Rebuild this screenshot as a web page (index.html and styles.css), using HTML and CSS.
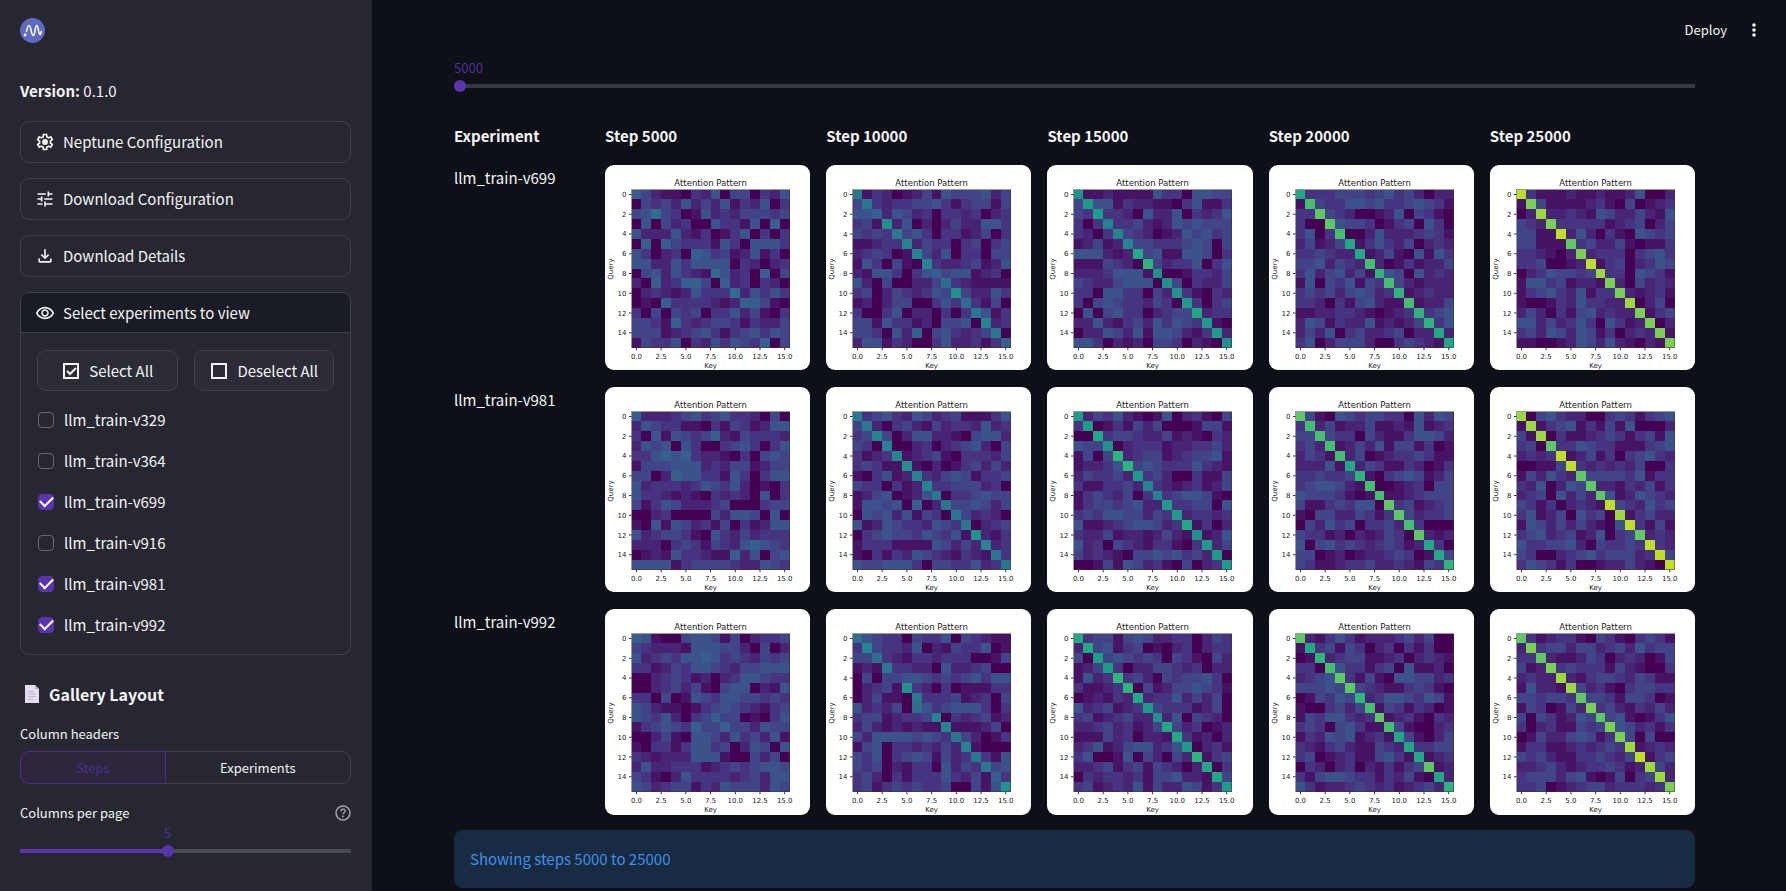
FILE: index.html
```html
<!DOCTYPE html>
<html lang="en">
<head>
<meta charset="utf-8">
<meta name="viewport" content="width=device-width, initial-scale=1">
<title>Neptune Gallery</title>
<link rel="stylesheet" href="styles.css">
</head>
<body>
<div class="app">
  <aside class="sidebar">
    <svg class="logo" viewBox="0 0 25 25" role="img" aria-label="Neptune">
      <circle cx="12.500" cy="12.500" r="12.500" fill="#5f69c2"/>
      <circle cx="5" cy="17" r="1.400" fill="#fff"/>
      <path d="M6.500 13.500C7.300 9.500 8.200 7.500 9.100 7.500c2 0 2 10 4.100 10 2 0 1.600-10 3.600-10 1.900 0 1.300 9 3.200 9 .6 0 .9-1.200 1.200-3" fill="none" stroke="#fff" stroke-width="1.600" stroke-linecap="round"/>
    </svg>
    <p class="version"><b>Version:</b> 0.1.0</p>
    <div class="panels">
      <details class="panel">
        <summary class="panel-head"><svg class="icon" viewBox="0 -960 960 960"><path d="m370-80-16-128q-13-5-24.500-12T307-235l-119 50L78-375l103-78q-1-7-1-13.500v-27q0-6.500 1-13.500L78-585l110-190 119 50q11-8 23-15t24-12l16-128h220l16 128q13 5 24.500 12t22.500 15l119-50 110 190-103 78q1 7 1 13.500v27q0 6.500-2 13.500l103 78-110 190-118-50q-11 8-23 15t-24 12L590-80H370Zm70-80h79l14-106q31-8 57.500-23.500T639-327l99 41 39-68-86-65q5-14 7-29.500t2-31.500q0-16-2-31.500t-7-29.500l86-65-39-68-99 42q-22-23-48.500-38.500T533-694l-13-106h-79l-14 106q-31 8-57.500 23.500T321-633l-99-41-39 68 86 64q-5 15-7 30t-2 32q0 16 2 31t7 30l-86 65 39 68 99-42q22 23 48.500 38.500T427-266l13 106Z"/><circle cx="481" cy="-480" r="140"/></svg>Neptune Configuration</summary>
      </details>
      <details class="panel">
        <summary class="panel-head"><svg class="icon" viewBox="0 -960 960 960"><path d="M440-120v-240h80v80h320v80H520v80h-80Zm-320-80v-80h240v80H120Zm160-160v-80H120v-80h160v-80h80v240h-80Zm160-80v-80h400v80H440Zm160-160v-240h80v80h160v80H680v80h-80Zm-480-80v-80h400v80H120Z"/></svg>Download Configuration</summary>
      </details>
      <details class="panel">
        <summary class="panel-head"><svg class="icon" viewBox="0 -960 960 960"><path d="M480-320 280-520l56-58 104 104v-326h80v326l104-104 56 58-200 200ZM240-160q-33 0-56.500-23.500T160-240v-120h80v120h480v-120h80v120q0 33-23.500 56.500T720-160H240Z"/></svg>Download Details</summary>
      </details>
      <details class="panel" open>
        <summary class="panel-head"><svg class="icon" viewBox="0 -980 960 960"><path d="M480-320q75 0 127.500-52.500T660-500q0-75-52.500-127.500T480-680q-75 0-127.500 52.500T300-500q0 75 52.500 127.500T480-320Zm0-72q-45 0-76.500-31.500T372-500q0-45 31.500-76.500T480-608q45 0 76.500 31.500T588-500q0 45-31.500 76.500T480-392Zm0 192q-146 0-266-81.500T40-500q54-137 174-218.500T480-800q146 0 266 81.500T920-500q-54 137-174 218.500T480-200Zm0-80q113 0 207.500-59.500T832-500q-50-101-144.500-160.500T480-720q-113 0-207.500 59.500T128-500q50 101 144.500 160.500T480-280Z"/></svg>Select experiments to view</summary>
        <div class="panel-body">
          <div class="button-row">
            <button class="button" type="button"><svg class="icon" viewBox="0 0 20 20"><path d="M3 3h14v14H3zM6 10l3 3 6-6" fill="none" stroke="currentColor" stroke-width="2"/></svg>Select All</button>
            <button class="button" type="button"><svg class="icon" viewBox="0 0 20 20"><path d="M3 3h14v14H3z" fill="none" stroke="currentColor" stroke-width="2"/></svg>Deselect All</button>
          </div>
          <div class="checks">
            <label class="check"><input type="checkbox">llm_train-v329</label>
            <label class="check"><input type="checkbox">llm_train-v364</label>
            <label class="check"><input type="checkbox" checked>llm_train-v699</label>
            <label class="check"><input type="checkbox">llm_train-v916</label>
            <label class="check"><input type="checkbox" checked>llm_train-v981</label>
            <label class="check"><input type="checkbox" checked>llm_train-v992</label>
          </div>
        </div>
      </details>
    </div>
    <h2 class="section-title"><svg class="page-icon" viewBox="0 0 14 18"><path d="M0 0h10l4 4v14H0z" fill="#e6dcef"/><path d="M10 0v4h4z" fill="#b9adc8"/><path d="M3 6.500h6M3 9h8M3 11.500h8M3 14h5" stroke="#c2b6cf" stroke-width="1"/></svg>Gallery Layout</h2>
    <div class="field">
      <span class="field-label" id="headers-label">Column headers</span>
      <div class="segments" role="group" aria-labelledby="headers-label">
        <button class="segment segment-active" type="button" aria-pressed="true">Steps</button>
        <button class="segment segment-wide" type="button" aria-pressed="false">Experiments</button>
      </div>
    </div>
    <div class="field">
      <div class="field-head">
        <label class="field-label" for="per-page">Columns per page</label>
        <svg class="help" viewBox="0 0 16 16" role="img" aria-label="Help"><circle cx="8" cy="8" r="7" fill="none" stroke="currentColor" stroke-width="1.500"/><path d="M5.900 6.300c0-1.200.9-2 2.100-2s2.100.8 2.100 1.900c0 1.500-2.100 1.600-2.100 3.100" fill="none" stroke="currentColor" stroke-width="1.400"/><circle cx="8" cy="11.500" r=".9" fill="currentColor"/></svg>
      </div>
      <div class="slider" style="--fill: 44.4%">
        <div class="slider-scale"><output class="slider-value" for="per-page">5</output></div>
        <input class="range" id="per-page" type="range" min="1" max="10" value="5">
      </div>
    </div>
  </aside>
  <main class="main">
    <header class="toolbar">
      <button class="tool" type="button">Deploy</button>
      <button class="tool" type="button" aria-label="Menu"><svg class="dots" viewBox="0 0 6 16"><circle cx="3" cy="3" r="1.800"/><circle cx="3" cy="8" r="1.800"/><circle cx="3" cy="13" r="1.800"/></svg></button>
    </header>
    <div class="content">
      <div class="slider" style="--fill: 0%">
        <div class="slider-scale"><output class="slider-value slider-value-start" for="step">5000</output></div>
        <input class="range" id="step" type="range" min="5000" max="50000" step="5000" value="5000" aria-label="Step">
      </div>
      <section class="gallery" id="gallery"></section>
      <p class="info">Showing steps 5000 to 25000</p>
    </div>
  </main>
</div>
<script src="gallery.js"></script>
</body>
</html>
```
FILE: styles.css
```css
* { box-sizing: border-box; }

body {
  margin: 0;
  background: #0d1017;
  color: #f4f4f6;
  font: 15px/24px "Noto Sans CJK JP", "Open Sans", sans-serif;
}

button { font: inherit; color: inherit; }

.app { display: flex; min-height: 100vh; }

.sidebar {
  flex: 0 0 372px;
  padding: 18px 21px 0 20px;
  background: #262730;
}

.logo { display: block; width: 25px; height: 25px; }
.version { margin: 36px 0 18px; }
.icon { width: 20px; height: 20px; flex: none; fill: currentColor; }

.panels { display: flex; flex-direction: column; gap: 15px; }
.panel { border: 1px solid #40414a; border-radius: 9px; overflow: hidden; }
.panel-head {
  display: flex;
  align-items: center;
  gap: 8px;
  height: 40px;
  padding: 0 14px;
  list-style: none;
  cursor: pointer;
}
.panel[open] .panel-head { background: #191c24; border-bottom: 1px solid #40414a; }
.panel-body { padding: 17px 16px 9px; }

.button-row { display: grid; grid-template-columns: 1fr 1fr; gap: 16px; }
.button {
  display: flex;
  align-items: center;
  justify-content: center;
  gap: 8px;
  height: 41px;
  padding: 0;
  border: 1px solid #40414a;
  border-radius: 9px;
  background: #2b2c36;
  white-space: nowrap;
}

.checks { margin-top: 8px; padding-left: 1px; }
.check { display: flex; align-items: center; gap: 10px; height: 41px; }
.check input {
  appearance: none;
  width: 16px;
  height: 16px;
  margin: 0;
  border: 1px solid #686973;
  border-radius: 4px;
}
.check input:checked {
  border-color: #5a34ad;
  background: #5a34ad;
  display: grid;
  place-items: center;
}
.check input:checked::before {
  content: "";
  width: 11px;
  height: 6px;
  border: solid #fff;
  border-width: 0 0 2px 2px;
  transform: translateY(-2px) rotate(-45deg);
}

.section-title {
  display: flex;
  align-items: center;
  gap: 10px;
  margin: 23px 0 14px;
  padding-left: 5px;
  font-size: 16px;
  line-height: 32px;
}
.page-icon { width: 14px; height: 18px; }

.field { margin-bottom: 19px; font-size: 13px; line-height: 20px; }
.field-head { display: flex; justify-content: space-between; align-items: center; }
.field-label { display: block; }
.help { width: 16px; height: 16px; color: #a3a4ab; }

.segments { display: flex; margin-top: 7px; }
.segment {
  flex: 145 1 0;
  height: 33px;
  padding: 0;
  border: 1px solid #40414a;
  border-left: 0;
  border-radius: 0 9px 9px 0;
  background: none;
}
.segment-wide { flex-grow: 186; }
.segment-active {
  border: 1px solid #4b2e86;
  border-radius: 9px 0 0 9px;
  background: #2d263c;
  color: #4e2f90;
}

.slider { display: flex; flex-direction: column; }
.slider-scale { position: relative; height: 20px; margin: 0 6px; }
.slider-value {
  position: absolute;
  left: var(--fill);
  transform: translateX(-50%);
  color: #4f2f96;
  font-size: 13px;
  line-height: 20px;
}
.slider-value-start { left: -6px; transform: none; }
.range {
  appearance: none;
  width: 100%;
  height: 12px;
  margin: 2px 0 0;
  background: linear-gradient(to right, #5a34ad var(--fill), #474954 var(--fill)) center / 100% 4px no-repeat;
}
.range::-webkit-slider-thumb {
  appearance: none;
  width: 12px;
  height: 12px;
  border-radius: 50%;
  background: #5a34ad;
}

.main { flex: 1; min-width: 0; }
.toolbar {
  display: flex;
  justify-content: flex-end;
  align-items: center;
  gap: 24px;
  height: 58px;
  padding: 2px 29px 0 0;
}
.tool { display: flex; padding: 0; border: 0; background: none; font-size: 13px; line-height: 20px; }
.dots { width: 6px; height: 16px; fill: currentColor; }

.content { padding: 0 91px 5px 82px; }
.content .range {
  background: linear-gradient(#363942, #363942) center / 100% 4px no-repeat;
}

.gallery {
  display: grid;
  grid-template-columns: minmax(0, 135fr) repeat(5, minmax(0, 205fr));
  gap: 17px 16px;
  margin: 32px 0 15px;
}
.column-title { font-weight: 700; }
.row-title { padding-top: 1px; }
.card { display: block; width: 100%; border-radius: 9px; background: #fff; }
.card text { font-family: "DejaVu Sans", sans-serif; font-size: 14px; fill: #222; }
.card .chart-title { font-size: 17px; }
.card .middle { text-anchor: middle; }
.card .end { text-anchor: end; }
.card rect { shape-rendering: crispEdges; }
.ticks { stroke: #333; stroke-width: 2; fill: none; }

.info {
  margin: 0;
  padding: 17px 16px;
  border-radius: 9px;
  background: #172b43;
  color: #3f8fe6;
}
```
FILE: gallery.js
```js
// Each map holds 16 rows of 16 cells; a cell indexes the viridis palette.
const palette = {
  0: '#440154', 1: '#471365', 2: '#482475', 3: '#463480', 4: '#414487', 5: '#3b528b',
  6: '#355f8d', 7: '#2f6c8e', 8: '#2a788e', 9: '#25848e', a: '#21918c', b: '#1e9c89',
  c: '#22a884', d: '#2fb47c', e: '#44bf70', f: '#5ec962', g: '#7ad151', h: '#9bd93c', i: '#bddf26'
};

const steps = [5000, 10000, 15000, 20000, 25000];

const experiments = {
  'llm_train-v699': [
    `6421103250440325 0434252425132503 4574301523244434 0504230053315060
     5222521301350303 0606433315305553 5302306534125130 5522535555032023
     0452532175230604 2062366406230320 0232125333725353 0106333321266410
     3040434033524103 4431632344313224 4441234531345354 1433503253543604`,
    `8132012415444524 4832334453134414 5562542303323023 341a250202422553
     4343845303312403 1123392433034034 2343019425033044 1530410932234125
     2155303564551230 5204002247321111 3402432354a42253 1202440035373140
     3003502203038513 4415331204450923 4430526045323480 2551320035223136`,
    `a112111153305544 4b55132211035113 43b3320522503235 3039334212545444
     3203943201254534 1241294433345404 555212c451155403 1114320d42335035
     22235551a0013324 432245550a403224 3305533042a31032 30454332430b3034
     050453302344c233 2252134253543b10 02254251554213b2 553021204430210a`,
    `c333444345342022 1e43355453345431 33f4320012504310 300f544301340530
     3503e00252223431 24124c1353240232 334322c124105153 4452432e20131224
     35245241d5405232 150435143e421222 3434245423d12322 33203145211e1224
     112233210123d345 2541322512124d35 24250342234022c2 350244420034321c`,
    `i311121121125002 1g41111231040123 02h2232154224215 432g333331234024
     4411i25203105434 44111f3422410113 332102g233303453 3340012i13402354
     02354434h3305431 155341221g204232 1345325133g21231 10013253322h0240
     242031452322g134 5524235305312g02 34254254130232g1 110012542521021g`
  ],
  'llm_train-v981': [
    `6222345345332040 2543311031431255 3051543462143332 2545053003453035
     3356563221030454 1444555232441244 4402655331530355 5233323543520103
     5332121032320503 4135422234000344 0023000042554050 1051542314031255
     5234431053242333 2220343143256543 0121533211625045 5555134444322543`,
    `8345325423411135 4820342142332523 3494025522104552 4309002302345204
     3123912341033324 34311a1020134242 1035129324541334 4330312933444230
     1245012580334544 1554506028445424 0545251430842320 5125433254380234
     034544354351a213 1333111154242923 1031325432132183 5445553044335238`,
    `b243521015023104 3b01314240001441 00c3443224121032 544a023331223342
     1404d23441234451 12235d4543335321 243342b342003114 3113342932123124
     1343240393455410 134434522b334405 3435544243b23323 51123455423c1302
     322412212421a125 5230432133103b24 42321044545342b0 001415423104023b`,
    `f410543443305254 3e24122411215123 44e4330421135542 342e124251441301
     2431e24012334311 22251c2431132013 334334d103454124 3455421e00123044
     54443101e1123444 411343550f341234 1044224313f42334 04253403342e3000
     433120212430f212 5045343234312c30 44012012234301c4 431123342232143d`,
    `h045322003431345 1h13451314150002 41h0311234313415 340f335433111345
     2323i12413034532 00114i3232324003 142532f444435133 3250254f22132413
     23405242f5125432 431302321i432534 3512405340h13422 15424242105i3141
     345234125034f232 5334452043343i32 43002345344423i4 354313001224210i`
  ],
  'llm_train-v992': [
    `6510045541402334 4322215554420402 5234355653432434 3312435543244555
     0023431202355433 0023424104550215 3304015435544343 5421101345432134
     5435203464401035 1345436446442544 0024105542534251 1033135534025405
     3212225551004240 2522333123434554 4310253333234255 5423441325444254`,
    `7543304335043211 3943325021433501 4473213323330014 1218332205223400
     0404455434345355 02341a3203011133 0241108333412304 5232407534555303
     3441233490323412 2421212119111240 4255554543842013 1450332324291000
     4350345414238315 4340213305243845 3420313335324163 341343433400415a`,
    `c344145422330243 2c45134010230233 40b4543430431042 124b302244323022
     1523d34204344530 31123d0412445431 012132c233524240 5234123b43331240
     34123422a2504320 223423124c423012 1114230221c31202 23512455235b0231
     350015042042d134 2234134143202c03 03233231445221c4 341232514225413b`,
    `f213531222342400 1c34143023031300 01d2344112302321 330e533134051120
     2345f31410554423 44454f4321134310 014354d235543541 1003424e14313201
     14355323f1231032 343045311e410023 1325451231c41024 32134211432c3344
     340123114531c123 0320230213134f12 31455433132410c2 531223432312342d`,
    `f312331043103431 2g34424423425344 33f2112430232014 412g343331421003
     2322h21344324311 15221h4231034433 443443f443144301 1430142g34213242
     40431254f4510135 302311434g542313 0142245413g40400 13311232343h1232
     434211334324i134 2234212334312h42 34442451014034h2 334012344233323g`
  ]
};

// Plot area inside the 410 x 410 chart
const left = 53;
const top_ = 49;
const size = 316;
const cell = size / 16;
const center = index => (index + 0.5) * cell;

function chart(map, label) {
  const rows = map.trim().split(/\s+/);
  let cells = '';
  let ticks = '';
  let labels = '';
  rows.forEach((row, y) => {
    [...row].forEach((value, x) => {
      cells += `<rect x="${left + x * cell}" y="${top_ + y * cell}" width="${cell}" height="${cell}" fill="${palette[value]}"/>`;
    });
  });
  for (let value = 0; value <= 14; value += 2) {
    const y = top_ + center(value);
    ticks += `M${left - 5} ${y}h5`;
    labels += `<text class="end" x="43" y="${y + 5}">${value}</text>`;
  }
  for (let value = 0; value <= 15; value += 2.5) {
    const x = left + center(value);
    ticks += `M${x} ${top_ + size}v5`;
    labels += `<text class="middle" x="${x}" y="387">${value.toFixed(1)}</text>`;
  }
  return `<svg class="card" viewBox="0 0 410 410" role="img" aria-label="${label}">
    ${cells}
    <rect x="${left}" y="${top_}" width="${size}" height="${size}" fill="none" stroke="#333" stroke-width="1"/>
    <path class="ticks" d="${ticks}"/>
    ${labels}
    <text class="middle chart-title" x="211" y="41">Attention Pattern</text>
    <text class="middle" x="211" y="405">Key</text>
    <text class="middle" transform="translate(16 208) rotate(-90)">Query</text>
  </svg>`;
}

let html = '<div class="column-title">Experiment</div>';
html += steps.map(step => `<div class="column-title">Step ${step}</div>`).join('');
for (const [name, maps] of Object.entries(experiments)) {
  html += `<div class="row-title">${name}</div>`;
  html += maps.map((map, i) => chart(map, `${name}, step ${steps[i]}`)).join('');
}
document.getElementById('gallery').innerHTML = html;
```
